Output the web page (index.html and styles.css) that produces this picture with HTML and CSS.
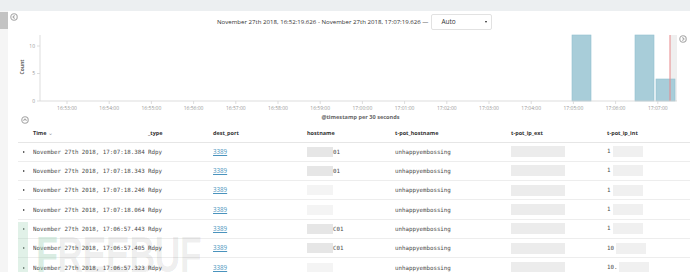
FILE: index.html
```html
<!DOCTYPE html>
<html lang="en">
<head>
<meta charset="UTF-8">
<meta name="viewport" content="width=device-width, initial-scale=1.0">
<title>Discover</title>
<link rel="stylesheet" href="styles.css">
</head>
<body>
<div class="topbar"></div>
<div class="page">
    <div class="sidebar">
        <div class="sidebar-tab"></div>
    </div>
    <div class="main">
        <div class="range-bar">
            <svg class="round-icon" viewBox="0 0 8 8">
                <circle cx="4" cy="4" r="3.2"/>
                <path d="M4.6 2.4 3 4l1.6 1.6"/>
            </svg>
            <span class="range-text">November 27th 2018, 16:52:19.626 - November 27th 2018, 17:07:19.626 &mdash;</span>
            <div class="interval-select">
                <span>Auto</span>
                <span class="caret"></span>
            </div>
        </div>

        <svg class="chart" width="682" height="79" viewBox="0 0 682 79">
            <!-- now marker + end shading -->
            <rect class="shade" x="662" y="3" width="7" height="66"/>
            <!-- bars -->
            <rect class="bar" x="564" y="3" width="19" height="66"/>
            <rect class="bar" x="627" y="3" width="19" height="66"/>
            <rect class="bar" x="648" y="47" width="19" height="22"/>
            <line class="now" x1="662" y1="3" x2="662" y2="69"/>
            <!-- axes -->
            <line class="axis" x1="32" y1="3" x2="32" y2="69"/>
            <line class="axis" x1="32" y1="69" x2="669" y2="69"/>
            <line class="axis" x1="29" y1="14" x2="32" y2="14"/>
            <line class="axis" x1="29" y1="41.5" x2="32" y2="41.5"/>
            <line class="axis" x1="29" y1="69" x2="32" y2="69"/>
            <text class="tick-y" x="27" y="15.8">10</text>
            <text class="tick-y" x="27" y="43.3">5</text>
            <text class="tick-y" x="27" y="70.8">0</text>
            <text class="axis-label" transform="translate(16 35) rotate(-90)">Count</text>
            <g class="ticks-x" id="ticks"></g>
            <svg class="round-icon" x="671" y="3" width="8" height="8" viewBox="0 0 8 8">
                <circle cx="4" cy="4" r="3.2"/>
                <path d="M3.4 2.4 5 4 3.4 5.6"/>
            </svg>
        </svg>

        <div class="table-toolbar">
            <svg class="round-icon toolbar-icon" viewBox="0 0 8 8">
                <circle cx="4" cy="4" r="3.2"/>
                <path d="M2.4 4.6 4 3l1.6 1.6"/>
            </svg>
            <div class="axis-title">@timestamp per 30 seconds</div>
        </div>

        <table class="doc-table">
            <colgroup>
                <col style="width:15px">
                <col style="width:115px">
                <col style="width:65px">
                <col style="width:94px">
                <col style="width:88px">
                <col style="width:116px">
                <col style="width:96px">
                <col>
            </colgroup>
            <thead>
                <tr>
                    <th></th>
                    <th>Time <span class="sort">&#8964;</span></th>
                    <th>_type</th>
                    <th>dest_port</th>
                    <th>hostname</th>
                    <th>t-pot_hostname</th>
                    <th>t-pot_ip_ext</th>
                    <th>t-pot_ip_int</th>
                </tr>
            </thead>
            <tbody>
                <tr>
                    <td><span class="expand"></span></td>
                    <td class="mono">November 27th 2018, 17:07:18.384</td>
                    <td class="mono">Rdpy</td>
                    <td><a href="#" class="port">3389</a></td>
                    <td class="mono"><span class="masked host"></span>01</td>
                    <td class="mono">unhappyembossing</td>
                    <td><span class="masked ext"></span></td>
                    <td class="mono">1<span class="masked int"></span></td>
                </tr>
                <tr>
                    <td><span class="expand"></span></td>
                    <td class="mono">November 27th 2018, 17:07:18.343</td>
                    <td class="mono">Rdpy</td>
                    <td><a href="#" class="port">3389</a></td>
                    <td class="mono"><span class="masked host"></span>01</td>
                    <td class="mono">unhappyembossing</td>
                    <td><span class="masked ext"></span></td>
                    <td class="mono">1<span class="masked int"></span></td>
                </tr>
                <tr>
                    <td><span class="expand"></span></td>
                    <td class="mono">November 27th 2018, 17:07:18.246</td>
                    <td class="mono">Rdpy</td>
                    <td><a href="#" class="port">3389</a></td>
                    <td class="mono"><span class="masked host faint"></span></td>
                    <td class="mono">unhappyembossing</td>
                    <td><span class="masked ext"></span></td>
                    <td class="mono">1<span class="masked int"></span></td>
                </tr>
                <tr>
                    <td><span class="expand"></span></td>
                    <td class="mono">November 27th 2018, 17:07:18.064</td>
                    <td class="mono">Rdpy</td>
                    <td><a href="#" class="port">3389</a></td>
                    <td class="mono"><span class="masked host faint"></span></td>
                    <td class="mono">unhappyembossing</td>
                    <td><span class="masked ext"></span></td>
                    <td class="mono">1<span class="masked int"></span></td>
                </tr>
                <tr>
                    <td><span class="expand"></span></td>
                    <td class="mono">November 27th 2018, 17:06:57.443</td>
                    <td class="mono">Rdpy</td>
                    <td><a href="#" class="port">3389</a></td>
                    <td class="mono"><span class="masked host"></span>C01</td>
                    <td class="mono">unhappyembossing</td>
                    <td><span class="masked ext"></span></td>
                    <td class="mono">1<span class="masked int"></span></td>
                </tr>
                <tr>
                    <td><span class="expand"></span></td>
                    <td class="mono">November 27th 2018, 17:06:57.405</td>
                    <td class="mono">Rdpy</td>
                    <td><a href="#" class="port">3389</a></td>
                    <td class="mono"><span class="masked host"></span>C01</td>
                    <td class="mono">unhappyembossing</td>
                    <td><span class="masked ext"></span></td>
                    <td class="mono">10<span class="masked int"></span></td>
                </tr>
                <tr>
                    <td><span class="expand"></span></td>
                    <td class="mono">November 27th 2018, 17:06:57.323</td>
                    <td class="mono">Rdpy</td>
                    <td><a href="#" class="port">3389</a></td>
                    <td class="mono"><span class="masked host faint"></span></td>
                    <td class="mono">unhappyembossing</td>
                    <td><span class="masked ext"></span></td>
                    <td class="mono">10.<span class="masked int"></span></td>
                </tr>
            </tbody>
        </table>

        <div class="watermark">
            <span class="wm-bar"></span>
            <span class="wm-text"><span class="wm-first">F</span>REEBUF</span>
        </div>
    </div>
</div>
<script>
    // x axis labels, one per minute
    const ticks = document.getElementById('ticks');
    const ns = 'http://www.w3.org/2000/svg';
    for (let i = 0; i < 15; i++) {
        const x = 59 + i * 42.2;
        const min = 53 + i;
        const label = (min < 60 ? '16:' + min : '17:0' + (min - 60)) + ':00';
        const tick = document.createElementNS(ns, 'line');
        tick.setAttribute('x1', x);
        tick.setAttribute('x2', x);
        tick.setAttribute('y1', 69);
        tick.setAttribute('y2', 72);
        tick.setAttribute('class', 'axis');
        ticks.appendChild(tick);
        const text = document.createElementNS(ns, 'text');
        text.setAttribute('x', x);
        text.setAttribute('y', 78);
        text.setAttribute('class', 'tick-x');
        text.textContent = label;
        ticks.appendChild(text);
    }
</script>
</body>
</html>
```
FILE: styles.css
```css
* {
    margin: 0;
    padding: 0;
    box-sizing: border-box;
}

body {
    width: 690px;
    height: 272px;
    overflow: hidden;
    background-color: #fff;
    font-family: 'Open Sans', 'Liberation Sans', sans-serif;
    color: #333;
}

.topbar {
    height: 11px;
    background-color: #eceff1;
}

.page {
    display: flex;
    height: 261px;
}

.sidebar {
    width: 8px;
    background-color: #f5f5f5;
}

.sidebar-tab {
    margin-top: 1px;
    height: 17px;
    background-color: #c3c3c3;
}

.main {
    flex: 1;
    position: relative;
    overflow: hidden;
}

.round-icon {
    width: 8px;
    height: 8px;
    fill: none;
    stroke: #a8a8a8;
    stroke-width: 1.1;
}

.range-bar {
    height: 21px;
    display: flex;
    align-items: center;
    padding-left: 2px;
}

.range-bar .round-icon {
    align-self: flex-start;
    margin-top: 2px;
}

.range-text {
    margin-left: 199px;
    font-size: 6.1px;
    color: #333;
    white-space: nowrap;
}

.interval-select {
    margin-left: 3px;
    width: 61px;
    height: 16px;
    border: 1px solid #e2e2e2;
    border-radius: 2px;
    display: flex;
    align-items: center;
    justify-content: space-between;
    padding: 0 4px 0 9px;
    font-size: 6.5px;
    color: #333;
}

.caret {
    width: 0;
    height: 0;
    border-left: 1.5px solid transparent;
    border-right: 1.5px solid transparent;
    border-top: 2.5px solid #222;
}

.chart {
    display: block;
}

.chart .bar {
    fill: #a8cdd9;
    stroke: #92c0cf;
    stroke-width: 0.6;
}

.chart .shade {
    fill: #efefef;
}

.chart .now {
    stroke: #e8878a;
    stroke-width: 1;
}

.chart .axis {
    stroke: #d4d4d4;
    stroke-width: 0.8;
}

.chart .tick-y {
    font-size: 5px;
    fill: #999;
    text-anchor: end;
}

.chart .tick-x {
    font-size: 5px;
    fill: #999;
    text-anchor: middle;
}

.chart .axis-label {
    font-size: 5px;
    font-weight: bold;
    fill: #666;
    text-anchor: middle;
}

.table-toolbar {
    height: 16px;
    display: flex;
    align-items: flex-start;
}

.toolbar-icon {
    margin-left: 13px;
    margin-top: 5px;
}

.axis-title {
    flex: 1;
    text-align: center;
    padding-top: 2px;
    padding-left: 2px;
    font-size: 5.6px;
    font-weight: bold;
    color: #666;
    line-height: 8px;
}

.doc-table {
    margin-left: 10px;
    width: 672px;
    table-layout: fixed;
    border-collapse: collapse;
}

.doc-table th {
    height: 15px;
    padding: 0 0 2px;
    text-align: left;
    font-size: 5.5px;
    line-height: 8px;
    font-weight: bold;
    color: #333;
    border-bottom: 1px solid #e6e6e6;
    white-space: nowrap;
}

.sort {
    color: #999;
    font-weight: normal;
}

.doc-table td {
    height: 19.33px;
    padding: 0;
    font-size: 6px;
    line-height: 8px;
    border-bottom: 1px solid #ededed;
    white-space: nowrap;
    overflow: hidden;
    vertical-align: middle;
}

.doc-table td.mono {
    font-family: 'DejaVu Sans Mono', 'Liberation Mono', monospace;
    font-size: 5.8px;
    color: #4a4a4a;
}

.expand {
    display: block;
    margin-left: 5px;
    width: 0;
    height: 0;
    border-left: 2.5px solid #333;
    border-top: 1.8px solid transparent;
    border-bottom: 1.8px solid transparent;
}

.port {
    font-size: 6.2px;
    color: #4a93bd;
    text-decoration: underline;
}

.masked {
    display: inline-block;
    vertical-align: middle;
    background-color: #e6e6e6;
}

.masked.host {
    width: 26px;
    height: 10px;
}

.masked.faint {
    background-color: #f4f4f4;
}

.masked.ext {
    width: 57px;
    height: 11px;
    margin-left: -3px;
    background-color: #ececec;
}

.masked.int {
    width: 30px;
    height: 11px;
    margin-left: 2px;
    background-color: #f0f0f0;
}

.watermark {
    position: absolute;
    left: 10px;
    top: 211px;
    display: flex;
    align-items: flex-start;
    pointer-events: none;
}

.wm-bar {
    width: 10px;
    height: 61px;
    background-color: rgba(170, 215, 190, 0.35);
}

.wm-text {
    margin-left: 8px;
    margin-top: 15px;
    font-family: 'Liberation Sans', sans-serif;
    font-size: 50px;
    font-weight: bold;
    line-height: 36px;
    letter-spacing: -1px;
    color: rgba(0, 0, 0, 0.07);
    transform: scaleX(0.72);
    transform-origin: left top;
    white-space: nowrap;
}

.wm-first {
    color: rgba(150, 205, 175, 0.35);
}
```
